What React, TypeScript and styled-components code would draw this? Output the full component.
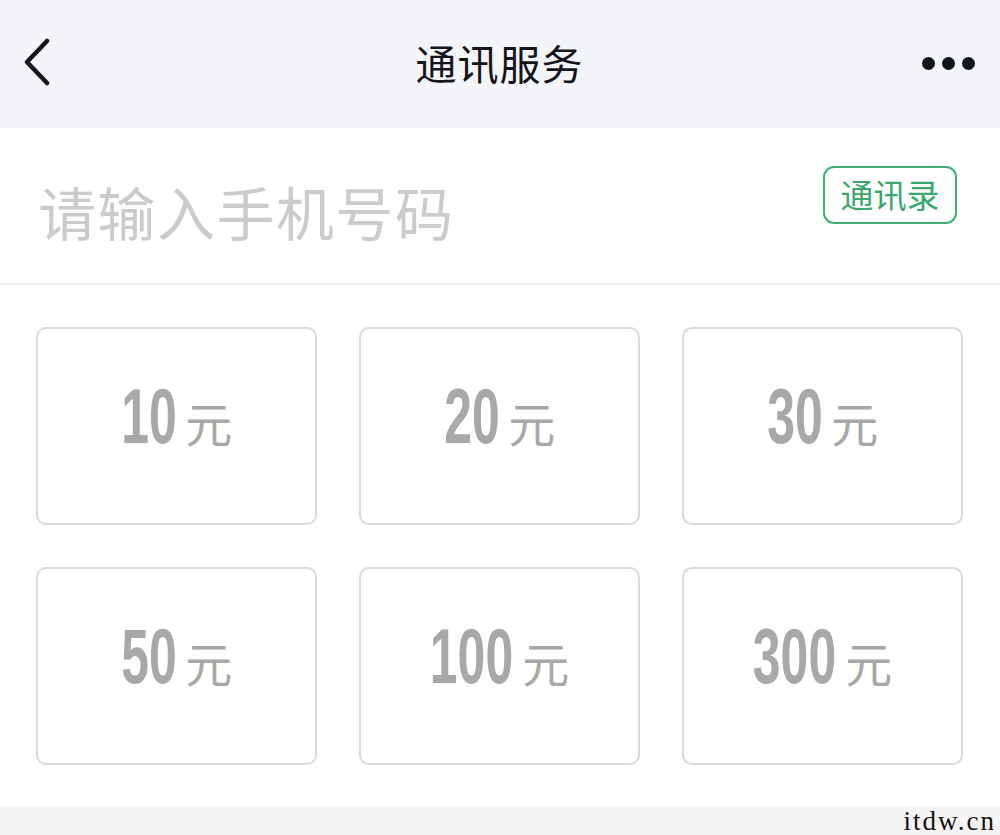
import React from 'react';
import styled, { createGlobalStyle } from 'styled-components';

const GlobalStyle = createGlobalStyle`
  html, body {
    margin: 0;
    padding: 0;
    background: #ffffff;
  }
  body {
    font-family: "Noto Sans CJK SC", "Noto Sans", sans-serif;
  }
`;

const Page = styled.div`
  width: 1000px;
  height: 835px;
  overflow: hidden;
  display: flex;
  flex-direction: column;
  background: #ffffff;
`;

const Header = styled.header`
  height: 128px;
  flex-shrink: 0;
  background: #f4f5f9;
  display: grid;
  grid-template-columns: 1fr auto 1fr;
  align-items: center;
  padding: 0 25px 0 24px;
  box-sizing: border-box;
`;

const BackButton = styled.button`
  justify-self: start;
  border: none;
  background: transparent;
  padding: 0;
  width: 30px;
  height: 50px;
  display: flex;
  align-items: center;
  margin-top: -2px;
`;

const Title = styled.h1`
  margin: 0;
  font-size: 41px;
  font-weight: 400;
  color: #14141c;
  letter-spacing: 1px;
  margin-top: -4px;
`;

const MoreButton = styled.button`
  justify-self: end;
  border: none;
  background: transparent;
  padding: 0;
  display: flex;
  gap: 7px;
  margin-top: -2px;
`;

const Dot = styled.span`
  width: 13px;
  height: 13px;
  border-radius: 50%;
  background: #11131f;
`;

const InputRow = styled.div`
  height: 157px;
  flex-shrink: 0;
  display: flex;
  justify-content: space-between;
  align-items: flex-start;
  padding: 38px 43px 0 38px;
  box-sizing: border-box;
  border-bottom: 2px solid #efefef;
`;

const Placeholder = styled.span`
  font-size: 58px;
  line-height: 1;
  color: #cbcbcb;
  margin-top: 16px;
  letter-spacing: 1.5px;
`;

const ContactsButton = styled.button`
  width: 134px;
  height: 58px;
  border: 2px solid #3fae74;
  border-radius: 11px;
  background: #ffffff;
  color: #3aa86e;
  font-family: "Noto Sans CJK SC", sans-serif;
  font-size: 33px;
  line-height: 1;
  padding: 0 0 2px;
  box-sizing: border-box;
`;

const AmountGrid = styled.div`
  display: grid;
  grid-template-columns: repeat(3, 281px);
  grid-auto-rows: 198px;
  column-gap: 42px;
  row-gap: 42px;
  padding: 42px 36px 41px 36px;
`;

const AmountCard = styled.div`
  border: 2px solid #d9d9d9;
  border-radius: 10px;
  box-sizing: border-box;
  display: flex;
  align-items: center;
  justify-content: center;
  color: #a8a8a8;
  padding-bottom: 20px;
`;

const AmountInner = styled.div`
  display: flex;
  align-items: flex-end;
`;

// digits are drawn narrow (condensed) – squeeze Liberation Sans Bold and
// pull the box in by the width the squeeze removed
const Amount = styled.span<{ $digits: number }>`
  display: inline-block;
  font-family: "Liberation Sans", Arial, sans-serif;
  font-weight: 700;
  font-size: 78px;
  line-height: 1;
  transform: scaleX(0.64);
  transform-origin: right center;
  margin-left: ${(p) => `calc(${p.$digits} * -0.556em * 0.36)`};
`;

const Unit = styled.span`
  font-family: "Noto Sans CJK SC", sans-serif;
  font-size: 47px;
  line-height: 1;
  margin-left: 9px;
  margin-bottom: 10px;
`;

const BottomBand = styled.div`
  flex: 1;
  background: #f6f4f5;
  display: flex;
  justify-content: flex-end;
  align-items: flex-start;
  overflow: hidden;
`;

const Watermark = styled.span`
  font-family: "Liberation Serif", serif;
  font-size: 27px;
  letter-spacing: 2px;
  color: #111;
  line-height: 1;
  margin-top: 2px;
  margin-right: 4px;
`;

const amounts = ['10', '20', '30', '50', '100', '300'];

const App: React.FC = () => {
  return (
    <>
      <GlobalStyle />
      <Page>
        <Header>
          <BackButton aria-label="返回">
            <svg width="30" height="50" viewBox="0 0 30 50">
              <path
                d="M23 3 L3 24 L23 45"
                fill="none"
                stroke="#15161f"
                strokeWidth="4.5"
                strokeLinecap="round"
                strokeLinejoin="round"
              />
            </svg>
          </BackButton>
          <Title>通讯服务</Title>
          <MoreButton aria-label="更多">
            <Dot />
            <Dot />
            <Dot />
          </MoreButton>
        </Header>
        <InputRow>
          <Placeholder>请输入手机号码</Placeholder>
          <ContactsButton>通讯录</ContactsButton>
        </InputRow>
        <AmountGrid>
          {amounts.map((a) => (
            <AmountCard key={a}>
              <AmountInner>
                <Amount $digits={a.length}>{a}</Amount>
                <Unit>元</Unit>
              </AmountInner>
            </AmountCard>
          ))}
        </AmountGrid>
        <BottomBand>
          <Watermark>itdw.cn</Watermark>
        </BottomBand>
      </Page>
    </>
  );
};

export default App;
